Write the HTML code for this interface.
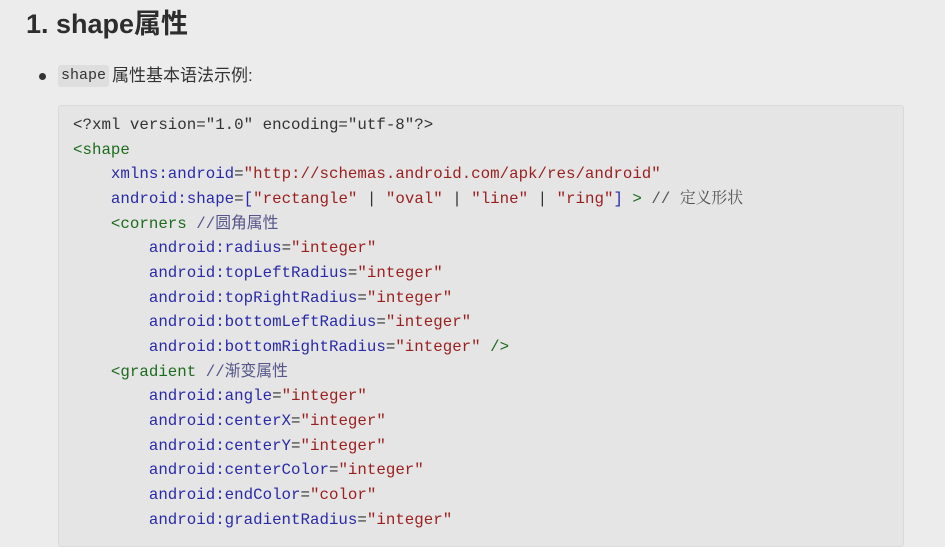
<!DOCTYPE html>
<html><head><meta charset="utf-8"><style>
html,body{margin:0;padding:0;width:945px;height:528px;overflow:hidden;background:#ececec;}
h1{position:absolute;left:26px;top:6px;margin:0;font:bold 27px/36px "Liberation Sans","Noto Sans CJK SC",sans-serif;color:#2d2d2d;}
.li{position:absolute;left:38px;top:63px;font:17px/26px "Liberation Sans","Noto Sans CJK SC",sans-serif;color:#333;}
.dot{position:absolute;left:1px;top:10px;width:7px;height:7px;border-radius:50%;background:#333;}
.li code{position:absolute;left:20px;top:2px;background:#dedede;border-radius:3px;padding:0 3px;font:15px/22px "Liberation Mono",monospace;}
.li .t{position:absolute;left:74px;top:0;white-space:nowrap;}
.box{position:absolute;left:58px;top:105px;width:844px;height:440px;background:#e5e5e5;border:1px solid #dadada;border-radius:3px;}
pre{position:absolute;left:73px;top:113px;margin:0;font:15.8px/24.65px "Liberation Mono","Noto Sans CJK SC",monospace;color:#333;}
.g{color:#1d6b1d}.b{color:#2a2aa8}.r{color:#9a1f1f}.c{color:#555;font-family:"Liberation Mono","Noto Serif CJK SC",monospace}.cb{color:#55558a}
</style></head><body>
<h1>1. shape属性</h1>
<div class="li"><span class="dot"></span><code>shape</code><span class="t">属性基本语法示例:</span></div>
<div class="box"></div>
<pre>&lt;?xml version="1.0" encoding="utf-8"?&gt;
<span class="g">&lt;shape</span>
    <span class="b">xmlns:android</span>=<span class="r">"http://schemas.android.com/apk/res/android"</span>
    <span class="b">android:shape</span>=<span class="b">[</span><span class="r">"rectangle"</span> | <span class="r">"oval"</span> | <span class="r">"line"</span> | <span class="r">"ring"</span><span class="b">]</span> <span class="g">&gt;</span> <span class="c">// 定义形状</span>
    <span class="g">&lt;corners</span> <span class="cb">//圆角属性</span>
        <span class="b">android:radius</span>=<span class="r">"integer"</span>
        <span class="b">android:topLeftRadius</span>=<span class="r">"integer"</span>
        <span class="b">android:topRightRadius</span>=<span class="r">"integer"</span>
        <span class="b">android:bottomLeftRadius</span>=<span class="r">"integer"</span>
        <span class="b">android:bottomRightRadius</span>=<span class="r">"integer"</span> <span class="g">/&gt;</span>
    <span class="g">&lt;gradient</span> <span class="cb">//渐变属性</span>
        <span class="b">android:angle</span>=<span class="r">"integer"</span>
        <span class="b">android:centerX</span>=<span class="r">"integer"</span>
        <span class="b">android:centerY</span>=<span class="r">"integer"</span>
        <span class="b">android:centerColor</span>=<span class="r">"integer"</span>
        <span class="b">android:endColor</span>=<span class="r">"color"</span>
        <span class="b">android:gradientRadius</span>=<span class="r">"integer"</span></pre>
</body></html>
